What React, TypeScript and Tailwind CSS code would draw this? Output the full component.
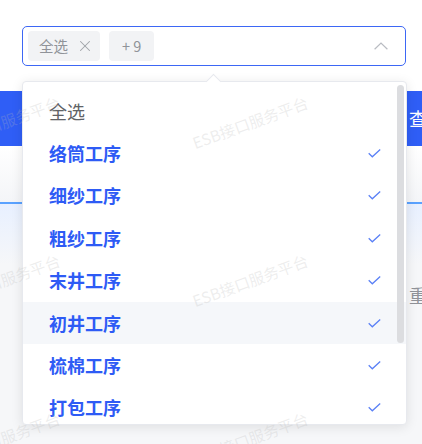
import { X } from "lucide-react";

const options = [
    { label: "全选", head: true },
    { label: "络筒工序" },
    { label: "细纱工序" },
    { label: "粗纱工序" },
    { label: "末井工序" },
    { label: "初井工序", hover: true },
    { label: "梳棉工序" },
    { label: "打包工序" },
];

const marks = [
    { x: 2, y: 122 },
    { x: 250, y: 122 },
    { x: 2, y: 280 },
    { x: 250, y: 280 },
    { x: 2, y: 438 },
    { x: 250, y: 438 },
];

function Check() {
    return (
        <svg width="13" height="9" viewBox="0 0 13 9" fill="none">
            <polyline points="0.7,4.3 4.3,7.8 12.2,0.6" stroke="#5a80f6" strokeWidth="1.3" />
        </svg>
    );
}

function Arrow() {
    return (
        <svg width="14" height="8" viewBox="0 0 14 8" fill="none">
            <polyline points="0.6,7.2 7,1 13.4,7.2" stroke="#b9bcc2" strokeWidth="1.2" />
        </svg>
    );
}

export default function App() {
    return (
        <div className="relative w-[422px] h-[444px] overflow-hidden bg-[#f6f7f9] font-['Noto_Sans_CJK_SC',sans-serif]">
            {/* page behind the popper */}
            <div className="flex flex-col">
                <div className="h-[91px] bg-white pl-[22px] pr-[16px] pt-[26px]">
                    <div className="flex items-center h-[40px] border border-[#3d67f5] rounded-[5px] bg-white pl-[5px] pr-[17px]">
                        <span className="flex items-center h-[30px] rounded-[4px] bg-[#f2f3f5] pl-[11px] pr-[6px] gap-[8px] text-[14.5px] text-[#909399]">
                            全选
                            <X size={18} strokeWidth={1.4} className="text-[#a0a3a8]" />
                        </span>
                        <span className="flex items-center h-[30px] ml-[9px] rounded-[4px] bg-[#f2f3f5] px-[13px] text-[14.5px] text-[#909399]">
                            + 9
                        </span>
                        <span className="ml-auto flex"><Arrow /></span>
                    </div>
                </div>
                <div className="h-[55px] bg-[#2f5ef6] flex items-center pl-[409px] text-[18px] text-white whitespace-nowrap">
                    查询
                </div>
                <div className="h-[56px] bg-gradient-to-b from-white to-[#f4f5f8]" />
                <div className="h-[1.5px] bg-[#5aa2ff]" />
                <div className="h-[60px] bg-gradient-to-b from-[#e8f0ff] to-[#f6f7f9]" />
                <div className="h-[42px] pl-[409px] pt-[19px] text-[18px] leading-[24px] text-[#909399] whitespace-nowrap">
                    重置
                </div>
            </div>

            {/* select dropdown */}
            <div className="absolute left-[22px] top-[81px] w-[385px] h-[344px] bg-white border border-[#e7e9ee] rounded-[4px] shadow-[0_2px_12px_rgba(0,0,0,0.1)]">
                <div className="absolute left-[185px] -top-[6px] w-[11px] h-[11px] rotate-45 bg-white border-l border-t border-[#e7e9ee]" />
                <div className="relative h-full overflow-hidden rounded-[4px] pt-[8px]">
                    {options.map((o) => (
                        <div
                            key={o.label}
                            className={`flex items-center h-[42.4px] pl-[26px] pr-[25px] text-[18px] ${o.hover ? "bg-[#f5f7fa]" : ""} ${o.head ? "text-[#606266]" : "font-bold text-[#2e5bf5]"}`}
                        >
                            <span>{o.label}</span>
                            {!o.head && <span className="ml-auto flex"><Check /></span>}
                        </div>
                    ))}
                    <div className="absolute right-[2px] top-[3px] w-[7px] h-[258px] rounded-full bg-[#dcdde0]" />
                </div>
            </div>

            {/* watermark */}
            <div className="absolute inset-0 pointer-events-none">
                {marks.map((m, i) => (
                    <span
                        key={i}
                        className="absolute w-[130px] text-center text-[15.5px] leading-[20px] whitespace-nowrap text-[rgba(185,185,185,0.25)] -rotate-[20deg]"
                        style={{ left: m.x - 65, top: m.y - 10 }}
                    >
                        ESB接口服务平台
                    </span>
                ))}
            </div>
        </div>
    );
}
